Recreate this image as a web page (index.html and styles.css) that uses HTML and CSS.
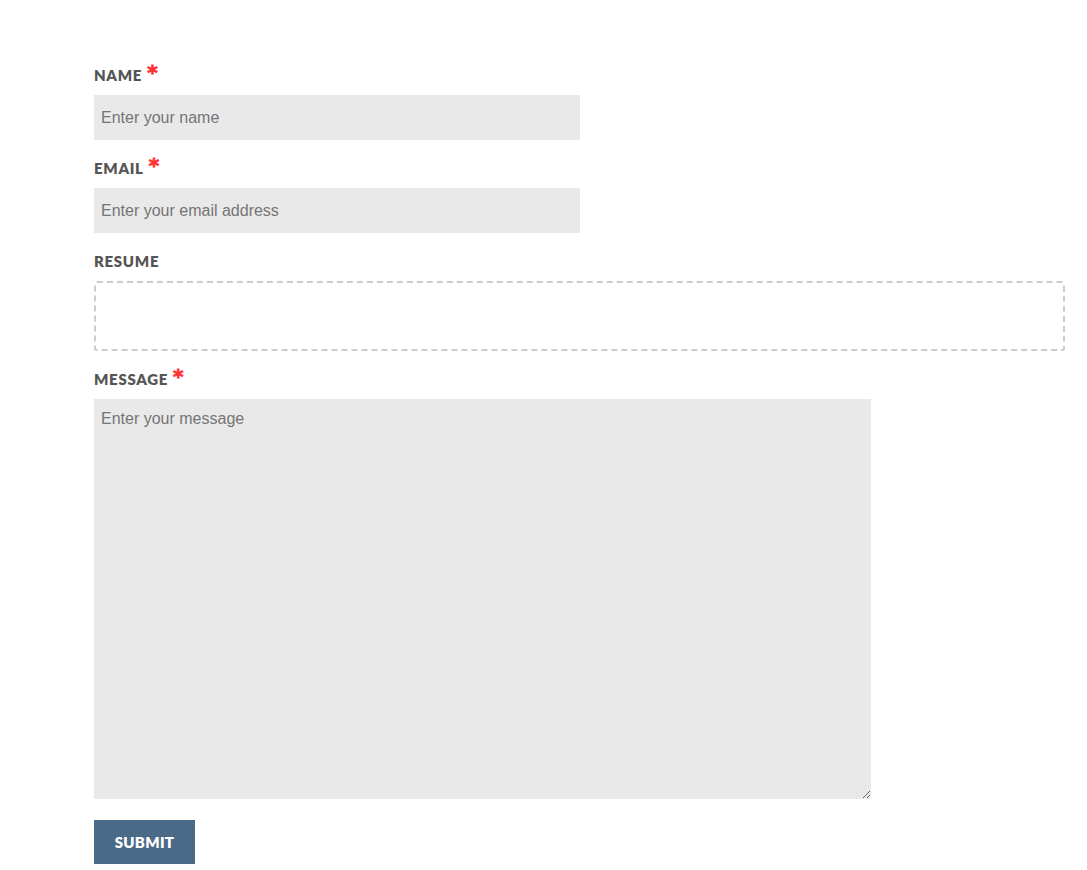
FILE: index.html
```html
<!DOCTYPE html>
<html>
<head>
<meta charset="utf-8">
<link rel="stylesheet" href="styles.css">
</head>
<body>
<form class="form">
  <div class="field">
    <label class="label">Name <span class="req">*</span></label>
    <input class="input" type="text" placeholder="Enter your name">
  </div>
  <div class="field">
    <label class="label">Email <span class="req">*</span></label>
    <input class="input" type="email" placeholder="Enter your email address">
  </div>
  <div class="field">
    <label class="label">Resume</label>
    <div class="dropzone"></div>
  </div>
  <div class="field">
    <label class="label">Message <span class="req">*</span></label>
    <textarea class="textarea" placeholder="Enter your message"></textarea>
  </div>
  <button class="submit" type="button">Submit</button>
</form>
</body>
</html>
```
FILE: styles.css
```css
html, body {
  margin: 0;
  padding: 0;
  background: #fff;
}
.form {
  padding: 65px 0 0 94px;
  display: flex;
  flex-direction: column;
  align-items: flex-start;
}
.field {
  display: flex;
  flex-direction: column;
  margin-bottom: 18px;
}
.label {
  font-family: Lato, "Open Sans", sans-serif;
  font-weight: 800;
  font-size: 15px;
  line-height: 20px;
  text-transform: uppercase;
  color: #555;
  letter-spacing: 0.7px;
  margin-bottom: 10px;
  display: flex;
  align-items: center;
}
.req {
  color: #f33;
  font-family: "DejaVu Sans", sans-serif;
  font-weight: 700;
  font-size: 20px;
  margin-left: 5px;
  line-height: 20px;
  position: relative;
  top: -3px;
  -webkit-text-stroke: 0.8px #f33;
}
.input {
  width: 486px;
  height: 45px;
  box-sizing: border-box;
  border: none;
  background: #e9e9e9;
  padding: 0 7px;
  font-family: "Liberation Sans", Arial, sans-serif;
  font-size: 16px;
  color: #333;
  outline: none;
  margin: 0;
}
.input::placeholder, .textarea::placeholder {
  color: #757575;
}
.dropzone {
  width: 971px;
  height: 70px;
  box-sizing: border-box;
  border: 2px dashed #ccc;
  border-radius: 3px;
}
.textarea {
  width: 777px;
  height: 400px;
  box-sizing: border-box;
  border: none;
  background: #e9e9e9;
  padding: 11px 7px;
  font-family: "Liberation Sans", Arial, sans-serif;
  font-size: 16px;
  color: #333;
  outline: none;
  margin: 0;
  display: block;
}
.field:last-of-type {
  margin-bottom: 21px;
}
.submit {
  width: 101px;
  height: 44px;
  border: none;
  background: #4b6a88;
  color: #fff;
  font-family: Lato, "Open Sans", sans-serif;
  font-weight: 800;
  font-size: 15px;
  letter-spacing: 0.3px;
  text-transform: uppercase;
  padding: 0;
  cursor: pointer;
}
```
